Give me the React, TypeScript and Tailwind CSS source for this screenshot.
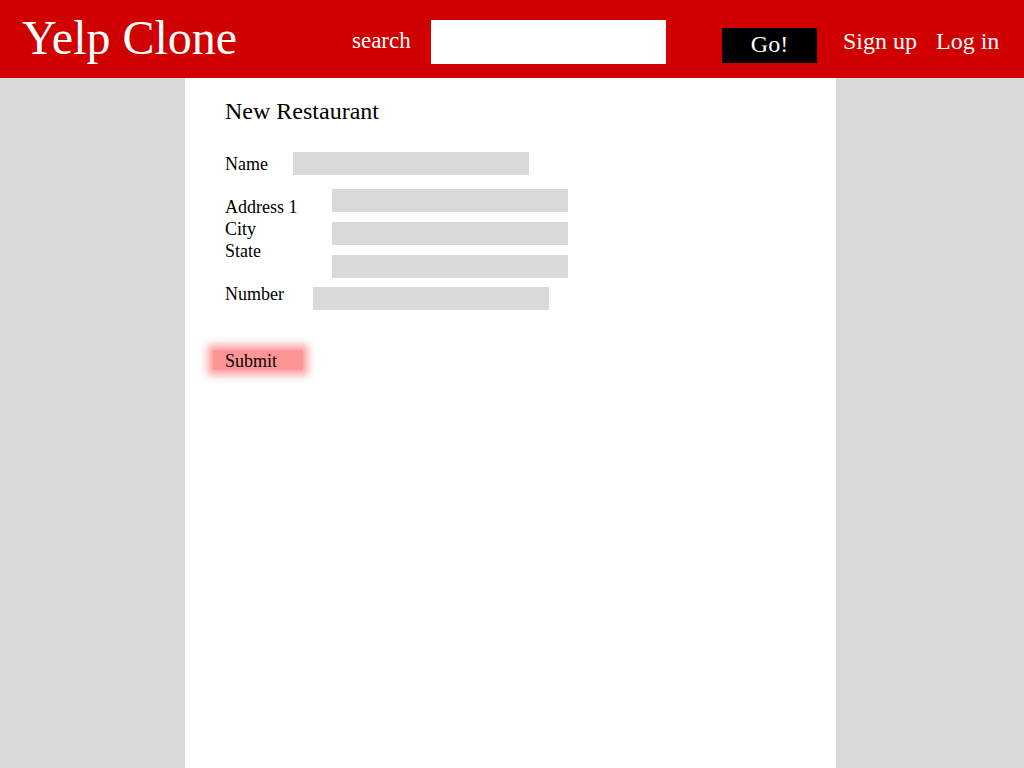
export default function App() {
  return (
    <div
      className="min-h-screen flex flex-col bg-[#d9d9d9] text-black"
      style={{ fontFamily: '"Liberation Serif", "Times New Roman", serif' }}
    >
      <header className="h-[78px] bg-[#d00000] flex items-start text-white">
        <div className="w-[352px] pl-[22px] mt-[14px] text-[48px] leading-[48px]">Yelp Clone</div>
        <div className="w-[79px] mt-[29px] text-[23px] leading-[24px]">search</div>
        <input type="text" className="mt-[20px] w-[235px] h-[44px] bg-white outline-none text-black px-2" />
        <button className="ml-[56px] mt-[28px] w-[95px] h-[35px] bg-black text-white text-[24px] leading-[32px] pb-[3px]">
          Go!
        </button>
        <a className="ml-[26px] mt-[29px] text-[24px] leading-[24px]">Sign up</a>
        <a className="ml-[19px] mt-[29px] text-[24px] leading-[24px]">Log in</a>
      </header>

      <main className="flex-1 flex">
        <div className="ml-[185px] w-[651px] bg-white pl-[40px] pt-[19px]">
          <h1 className="text-[24px] leading-[29px]">New Restaurant</h1>

          <form className="text-[18px] leading-[22px]">
            <div className="flex items-start mt-[26px]">
              <label className="w-[68px] mt-[1px]">Name</label>
              <input type="text" className="w-[236px] h-[23px] bg-[#d9d9d9] outline-none" />
            </div>

            <div className="flex items-start mt-[14px]">
              <div className="w-[107px] mt-[7px] flex flex-col">
                <label>Address 1</label>
                <label>City</label>
                <label>State</label>
              </div>
              <div className="flex flex-col gap-[10px]">
                <input type="text" className="w-[236px] h-[23px] bg-[#d9d9d9] outline-none" />
                <input type="text" className="w-[236px] h-[23px] bg-[#d9d9d9] outline-none" />
                <input type="text" className="w-[236px] h-[23px] bg-[#d9d9d9] outline-none" />
              </div>
            </div>

            <div className="flex items-start mt-[3px]">
              <label className="w-[88px] mt-[2px]">Number</label>
              <input type="text" className="mt-[6px] w-[236px] h-[23px] bg-[#d9d9d9] outline-none" />
            </div>

            <button
              type="button"
              className="block mt-[40px] -ml-[12px] w-[90px] h-[20px] pl-[12px] text-left leading-[22px] bg-[#ff9494] shadow-[0_0_8px_5px_#ff9e9e]"
            >
              Submit
            </button>
          </form>
        </div>
      </main>
    </div>
  );
}
